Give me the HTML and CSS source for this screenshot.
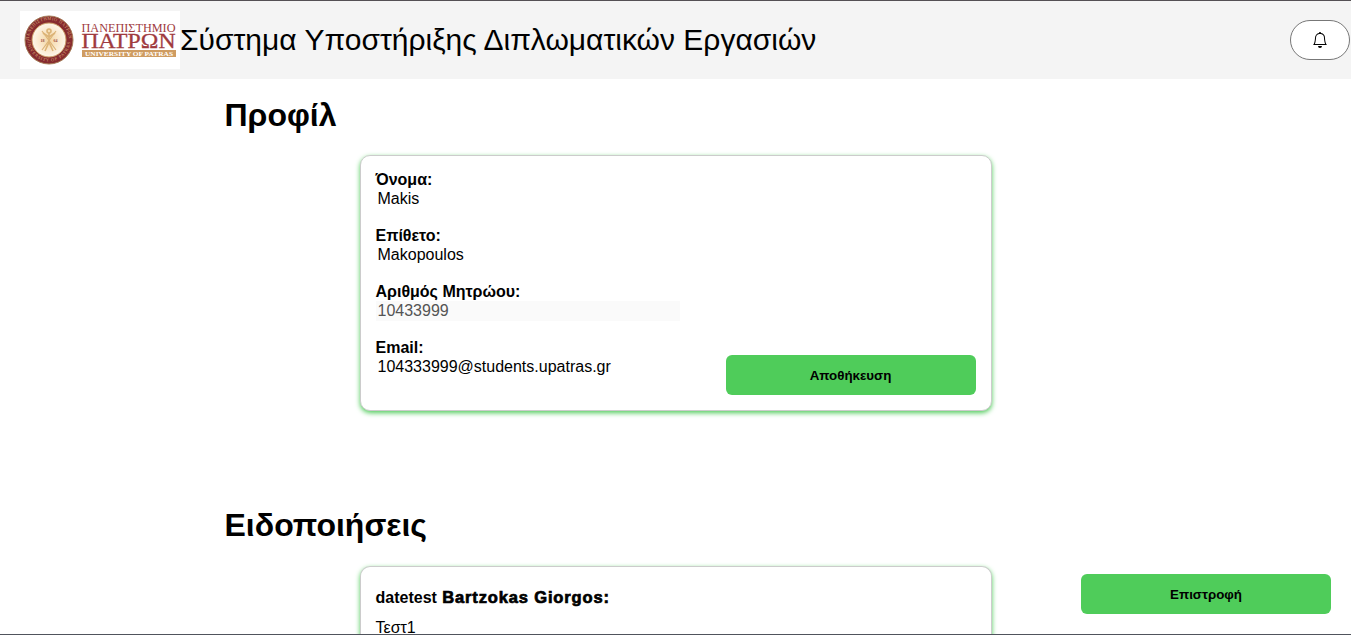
FILE: index.html
```html
<!DOCTYPE html>
<html lang="el">
<head>
<meta charset="utf-8">
<title>Σύστημα Υποστήριξης Διπλωματικών Εργασιών</title>
<link rel="stylesheet" href="styles.css">
</head>
<body>
<header class="topbar">
  <svg class="logo" viewBox="0 0 160 58" role="img" aria-label="Πανεπιστήμιο Πατρών">
    <defs>
      <path id="ring-top" d="M9 29a20 20 0 0 1 40 0"/>
      <path id="ring-bottom" d="M7.500 29a21.500 21.500 0 0 0 43 0"/>
      <radialGradient id="seal"><stop offset="0" stop-color="#f3d6a2"/><stop offset=".6" stop-color="#fae9ce"/><stop offset="1" stop-color="#fdf6ea"/></radialGradient>
    </defs>
    <rect width="160" height="58" fill="#fff"/>
    <circle cx="29" cy="29" r="24" fill="#862b2f" stroke="#a67d58" stroke-width="1"/>
    <circle cx="29" cy="29" r="17" fill="url(#seal)" stroke="#c99a62" stroke-width="1"/>
    <g class="ring-text">
      <text><textPath href="#ring-top" textLength="61">ΠΑΝΕΠΙΣΤΗΜΙΟ ΠΑΤΡΩΝ</textPath></text>
      <text><textPath href="#ring-bottom" textLength="65">UNIVERSITY OF PATRAS</textPath></text>
    </g>
    <g fill="none" stroke="#dcb477" stroke-width="1.600">
      <path d="M22 20l14 19M36 20L22 39" stroke-width="1.200"/>
      <path d="M29 22v9l-4 9M29 31l4 9M23 22l6 4 6-4"/>
      <circle cx="29" cy="20" r="2" fill="#f7dfb5"/>
    </g>
    <g class="seal-year"><text x="20.500" y="31">18</text><text x="33.500" y="31">64</text></g>
    <g class="wordmark">
      <text x="61.500" y="21" font-size="13.500" textLength="94" lengthAdjust="spacingAndGlyphs">ΠΑΝΕΠΙΣΤΗΜΙΟ</text>
      <text class="wordmark-main" x="61.500" y="37" font-size="20.500" textLength="94" lengthAdjust="spacingAndGlyphs">ΠΑΤΡΩΝ</text>
    </g>
    <rect x="62" y="39" width="94" height="7" fill="#cf9c61"/>
    <text class="wordmark-sub" x="65" y="45" textLength="88" lengthAdjust="spacingAndGlyphs">UNIVERSITY OF PATRAS</text>
  </svg>
  <div class="app-title">Σύστημα Υποστήριξης Διπλωματικών Εργασιών</div>
  <button class="bell" aria-label="Ειδοποιήσεις">
    <svg width="16" height="16" viewBox="0 0 16 16" fill="currentColor"><path d="M8 16a2 2 0 0 0 2-2H6a2 2 0 0 0 2 2M8 1.918l-.797.161A4 4 0 0 0 4 6c0 .628-.134 2.197-.459 3.742-.16.767-.376 1.566-.663 2.258h10.244c-.287-.692-.502-1.490-.663-2.258C12.134 8.197 12 6.628 12 6a4 4 0 0 0-3.203-3.920zM14.220 12c.223.447.481.801.780 1H1c.299-.199.557-.553.780-1C2.680 10.200 3 6.880 3 6c0-2.420 1.720-4.440 4.005-4.901a1 1 0 1 1 1.990 0A5 5 0 0 1 13 6c0 .880.320 4.200 1.220 6"/></svg>
  </button>
</header>
<main class="content">
  <h1 class="heading">Προφίλ</h1>
  <section class="card profile">
    <div class="fields">
      <div class="field"><b>Όνομα:</b><div class="value">Makis</div></div>
      <div class="field"><b>Επίθετο:</b><div class="value">Makopoulos</div></div>
      <div class="field"><b>Αριθμός Μητρώου:</b><div class="value disabled">10433999</div></div>
      <div class="field"><b>Email:</b><div class="value">104333999@students.upatras.gr</div></div>
    </div>
    <button class="btn">Αποθήκευση</button>
  </section>
  <h1 class="heading notices-heading">Ειδοποιήσεις</h1>
  <section class="card notices">
    <p class="notice-title">datetest <span class="sender">Bartzokas Giorgos:</span></p>
    <p class="notice-text">Τεστ1</p>
  </section>
</main>
<button class="btn back">Επιστροφή</button>
<div class="bottom-edge"></div>
</body>
</html>
```
FILE: styles.css
```css
* { box-sizing: border-box; }
body {
  margin: 0;
  height: 635px;
  overflow: hidden;
  background: #fff;
  color: #000;
  font: 16px/18px "Liberation Sans", Arial, sans-serif;
}
.topbar {
  display: flex;
  align-items: center;
  height: 79px;
  padding: 0 1px 0 20px;
  border-top: 1px solid #545054;
  background: #f4f4f4;
}
.logo { width: 160px; height: 58px; }
.ring-text { font: 4.5px "Liberation Serif", serif; fill: #d8a675; }
.seal-year { font: bold 4px "Liberation Serif", serif; fill: #9c4a40; }
.wordmark { font-family: "Liberation Serif", serif; fill: #a03a3e; }
.wordmark-main { stroke: #a03a3e; stroke-width: .3; }
.wordmark-sub { font: bold 6.500px "Liberation Serif", serif; fill: #fff; }
.app-title { font-size: 30px; line-height: 36px; white-space: nowrap; }
.bell {
  display: flex;
  align-items: center;
  justify-content: center;
  width: 60px;
  height: 40px;
  margin-left: auto;
  padding: 0;
  border: 1px solid #777;
  border-radius: 20px;
  background: #fff;
  color: #000;
}
.content { width: 902px; height: 556px; margin: 0 auto; overflow: hidden; }
.heading { margin: 0; padding-top: 18px; font-size: 32px; line-height: 36px; }
.card {
  width: 632px;
  margin: 22px auto 0;
  padding: 15px;
  border: 1px solid #ccc;
  border-radius: 10px;
  background: #fff;
  box-shadow: 0 2px 5px #4fcc5a;
}
.profile { display: flex; justify-content: space-between; align-items: flex-end; height: 256px; }
.fields { align-self: flex-start; width: 304px; }
.field { height: 56px; }
.field b { display: block; }
.value { height: 20px; padding: 1px 2px; }
.disabled { background: #fafafa; color: #545454; }
.btn {
  width: 250px;
  height: 40px;
  padding: 0;
  border: 0;
  border-radius: 6px;
  background: #4fcc5a;
  color: #000;
  font: bold 13.333px "Liberation Sans", Arial, sans-serif;
}
.notices-heading { padding-top: 96px; }
.notices { height: 90px; margin-top: 23px; padding-top: 21px; border-bottom: 0; border-radius: 10px 10px 0 0; }
.notice-title { margin: 0; height: 19px; font-weight: bold; }
.sender { margin-left: 1px; font-size: 16.5px; letter-spacing: .85px; -webkit-text-stroke: .7px #000; }
.notice-text { margin: 12px 0 0; }
.back { position: fixed; right: 20px; bottom: 21px; }
.bottom-edge { position: fixed; inset: auto 0 0; height: 1px; background: #50545c; }
```
